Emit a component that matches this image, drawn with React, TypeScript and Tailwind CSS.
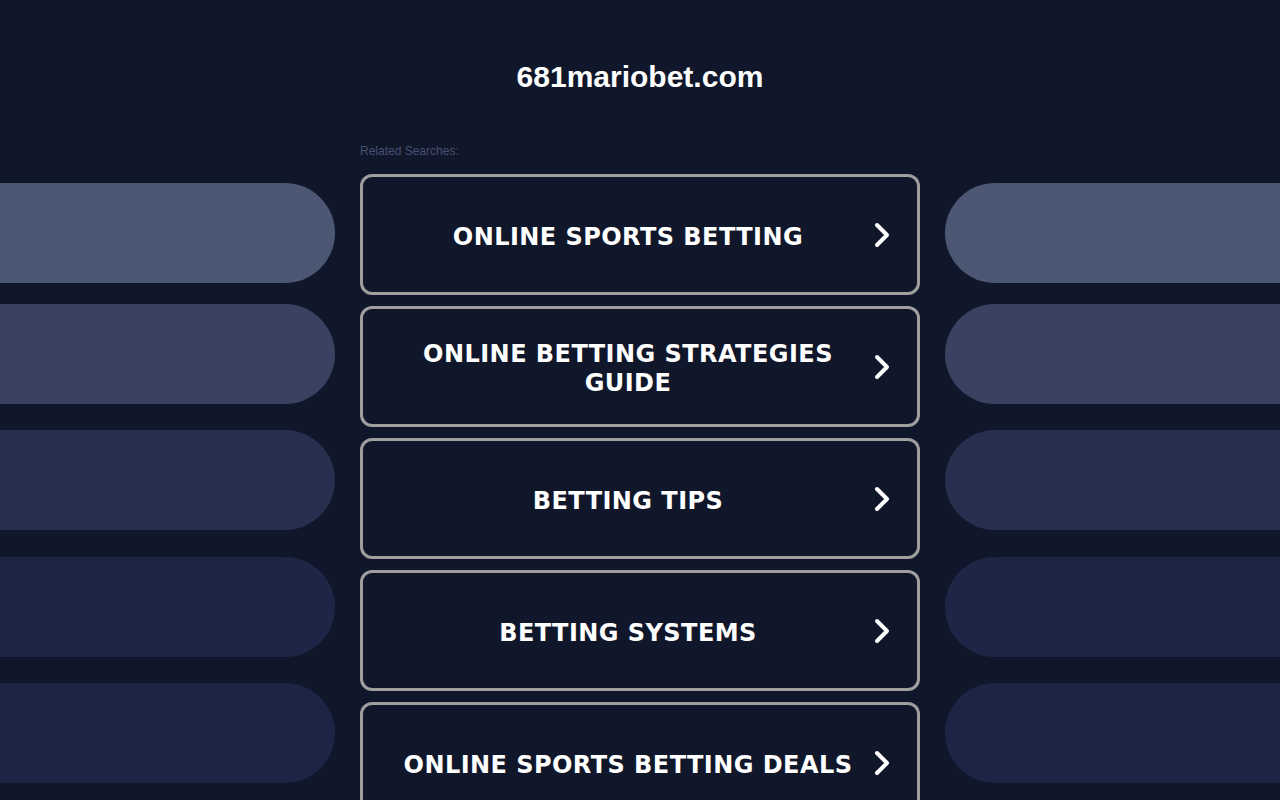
import * as React from 'react';

const searches = [
	'ONLINE SPORTS BETTING',
	'ONLINE BETTING STRATEGIES GUIDE',
	'BETTING TIPS',
	'BETTING SYSTEMS',
	'ONLINE SPORTS BETTING DEALS'
];

const leftPills = [
	'bg-[#4c5774] mb-[21px]',
	'bg-[#394361] mb-[26px]',
	'bg-[#262f4d] mb-[27px]',
	'bg-[#1d2646] mb-[26px]',
	'bg-[#1c2545]'
];

const Chevron: React.FC = () => (
	<svg width="24" height="30" viewBox="0 0 24 30" fill="none" className="shrink-0">
		<path
			d="M4 5 L14 15 L4 25"
			stroke="#ffffff"
			strokeWidth="4"
			strokeLinecap="round"
			strokeLinejoin="round"
		/>
	</svg>
);

const App: React.FC = () => {
	return (
		<div className="min-h-screen overflow-hidden bg-[#11172b] font-['Liberation_Sans',Arial,sans-serif]">
			<div className="h-[140px] pt-[59px] text-center">
				<h1 className="text-[30px] leading-[36px] font-bold text-white">681mariobet.com</h1>
			</div>

			<div className="flex items-start">
				<div className="w-[335px] shrink-0 pt-[43px]">
					{leftPills.map((cls, i) => (
						<div key={i} className={`h-[100px] rounded-r-[50px] ${cls}`} />
					))}
				</div>

				<div className="mx-[25px] w-[560px] shrink-0">
					<div className="pt-[4px] text-[12px] leading-[14px] text-[#465071]">Related Searches:</div>
					<div className="mt-[16px] flex flex-col gap-[11px]">
						{searches.map((s) => (
							<a
								key={s}
								href="#"
								className="flex h-[121px] items-center rounded-[12px] border-[3px] border-[#9e9e9e] px-[20px] text-white"
							>
								<span className="flex-1 px-[10px] pt-[5px] text-center font-['DejaVu_Sans',Verdana,sans-serif] text-[24px] leading-[29px] font-bold tracking-[0.45px]">
									{s}
								</span>
								<Chevron />
							</a>
						))}
					</div>
				</div>

				<div className="w-[335px] shrink-0 pt-[43px]">
					{leftPills.map((cls, i) => (
						<div key={i} className={`h-[100px] rounded-l-[50px] ${cls}`} />
					))}
				</div>
			</div>
		</div>
	);
};

export default App;
